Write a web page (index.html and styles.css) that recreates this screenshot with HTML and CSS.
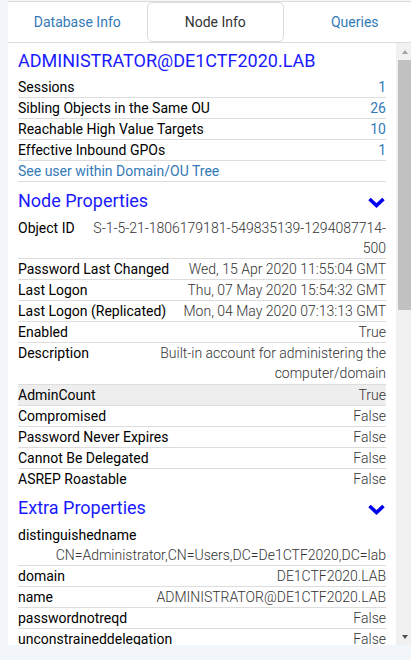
FILE: index.html
```html
<!DOCTYPE html>
<html>
<head>
<meta charset="utf-8">
<link rel="stylesheet" href="styles.css">
</head>
<body>
<div class="panel">
  <div class="tabs">
    <div class="tab"><span class="tab-label link">Database Info</span></div>
    <div class="tab active"><span class="tab-label">Node Info</span></div>
    <div class="tab"><span class="tab-label link">Queries</span></div>
  </div>
  <div class="body">
    <div class="content">
      <div class="title">ADMINISTRATOR@DE1CTF2020.LAB</div>
      <div class="rows">
        <div class="row"><span class="label">Sessions</span><span class="value num">1</span></div>
        <div class="row"><span class="label">Sibling Objects in the Same OU</span><span class="value num">26</span></div>
        <div class="row"><span class="label">Reachable High Value Targets</span><span class="value num">10</span></div>
        <div class="row"><span class="label">Effective Inbound GPOs</span><span class="value num">1</span></div>
        <div class="row row-link"><span class="link-text">See user within Domain/OU Tree</span></div>
      </div>

      <div class="section-head">
        <span class="section-title">Node Properties</span>
        <svg class="chev" width="17" height="11" viewBox="0 0 17 11"><path d="M1.5 2 L8.5 8.5 L15.5 2" fill="none" stroke="#0000f0" stroke-width="3.6" stroke-linejoin="miter"/></svg>
      </div>
      <div class="rows">
        <div class="row"><span class="label">Object ID</span><span class="value">S-1-5-21-1806179181-549835139-1294087714-500</span></div>
        <div class="row"><span class="label">Password Last Changed</span><span class="value">Wed, 15 Apr 2020 11:55:04 GMT</span></div>
        <div class="row"><span class="label">Last Logon</span><span class="value">Thu, 07 May 2020 15:54:32 GMT</span></div>
        <div class="row"><span class="label">Last Logon (Replicated)</span><span class="value">Mon, 04 May 2020 07:13:13 GMT</span></div>
        <div class="row"><span class="label">Enabled</span><span class="value">True</span></div>
        <div class="row tall"><span class="label">Description</span><span class="value">Built-in account for administering the computer/domain</span></div>
        <div class="row hover"><span class="label">AdminCount</span><span class="value">True</span></div>
        <div class="row"><span class="label">Compromised</span><span class="value">False</span></div>
        <div class="row"><span class="label">Password Never Expires</span><span class="value">False</span></div>
        <div class="row"><span class="label">Cannot Be Delegated</span><span class="value">False</span></div>
        <div class="row"><span class="label">ASREP Roastable</span><span class="value">False</span></div>
      </div>

      <div class="section-head">
        <span class="section-title">Extra Properties</span>
        <svg class="chev" width="17" height="11" viewBox="0 0 17 11"><path d="M1.5 2 L8.5 8.5 L15.5 2" fill="none" stroke="#0000f0" stroke-width="3.6" stroke-linejoin="miter"/></svg>
      </div>
      <div class="rows">
        <div class="row stacked"><span class="label">distinguishedname</span><span class="value">CN=Administrator,CN=Users,DC=De1CTF2020,DC=lab</span></div>
        <div class="row"><span class="label">domain</span><span class="value">DE1CTF2020.LAB</span></div>
        <div class="row"><span class="label">name</span><span class="value">ADMINISTRATOR@DE1CTF2020.LAB</span></div>
        <div class="row"><span class="label">passwordnotreqd</span><span class="value">False</span></div>
        <div class="row"><span class="label">unconstraineddelegation</span><span class="value">False</span></div>
      </div>
    </div>
    <div class="scrollbar">
      <div class="sb-btn"><span class="tri-up"></span></div>
      <div class="sb-track">
        <div class="sb-thumb"></div>
      </div>
      <div class="sb-btn"><span class="tri-down"></span></div>
    </div>
  </div>
</div>
</body>
</html>
```
FILE: styles.css
```css
html, body {
  margin: 0;
  padding: 0;
  overflow: hidden;
  height: 660px;
}
body {
  background: #f2f5fa;
  font-family: Roboto, "Liberation Sans", Arial, sans-serif;
  font-size: 14px;
  color: #000;
  padding-top: 1px;
  box-sizing: border-box;
}
.panel {
  margin-left: 8px;
  width: 415px;
  background: #fff;
  border-top: 1px solid #dcdcdc;
}
.tabs {
  display: flex;
  height: 40px;
  border-bottom: 1px solid #dcdcdc;
}
.tab {
  width: 138.5px;
  flex: none;
  display: flex;
  align-items: center;
  justify-content: center;
  box-sizing: border-box;
}
.tab.active {
  border: 1px solid #dcdcdc;
  border-radius: 5px;
  margin-right: 2px;
  width: 136.5px;
  margin-left: 0.5px;
}
.tab-label {
  font-size: 14px;
  color: #333;
}
.tab-label.link {
  color: #337ab7;
}
.body {
  display: flex;
  height: 602px;
}
.content {
  width: 388px;
  flex: none;
  box-sizing: border-box;
  padding: 0 10px;
  overflow: hidden;
}
.title {
  color: #1a1aff;
  font-size: 18px;
  line-height: 22px;
  padding-top: 7px;
  margin-bottom: 5px;
  white-space: nowrap;
}
.rows {
  display: flex;
  flex-direction: column;
}
.row {
  display: flex;
  justify-content: space-between;
  line-height: 20px;
  border-top: 1px solid #dddddd;
}
.row:first-child {
  border-top: none;
}
.row.tall {
  padding-bottom: 1px;
}
.row.hover {
  background: #eeeeee;
}
.row-link {
  border-bottom: 1px solid #dddddd;
}
.label {
  flex: none;
  color: #000;
  white-space: nowrap;
}
.value {
  flex: 1 1 auto;
  min-width: 0;
  text-align: right;
  padding-left: 16px;
  color: #333;
  font-weight: 300;
}
.value.num {
  color: #337ab7;
  font-weight: 400;
}
.link-text {
  color: #337ab7;
}
.row.stacked {
  flex-direction: column;
}
.row.stacked .value {
  white-space: nowrap;
}
.section-head {
  display: flex;
  justify-content: space-between;
  align-items: center;
  padding-top: 8px;
  margin-bottom: 6px;
  height: 22px;
}
.section-title {
  color: #1a1aff;
  font-size: 18px;
  line-height: 22px;
}
.chev {
  margin-right: 1px;
  margin-top: 2px;
}
.scrollbar {
  width: 17px;
  flex: none;
  background: #f1f1f1;
  display: flex;
  flex-direction: column;
}
.sb-btn {
  height: 17px;
  display: flex;
  align-items: center;
  justify-content: center;
}
.sb-track {
  flex: 1;
  padding: 0 2px;
}
.sb-thumb {
  height: 250px;
  background: #c1c1c1;
}
.tri-up, .tri-down {
  width: 0;
  height: 0;
  border-left: 3.5px solid transparent;
  border-right: 3.5px solid transparent;
}
.tri-up {
  border-bottom: 4px solid #a3a3a3;
}
.tri-down {
  border-top: 4px solid #505050;
}
```
